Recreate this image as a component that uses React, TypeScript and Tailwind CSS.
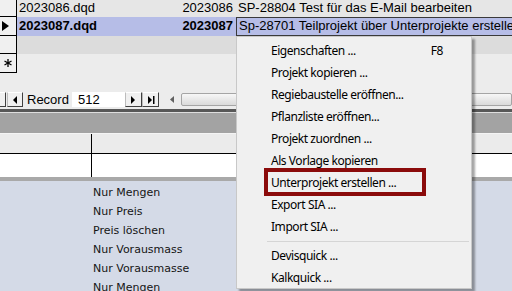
import React from 'react';

const MENU_ITEMS = [
  { label: 'Eigenschaften ...', shortcut: 'F8' },
  { label: 'Projekt kopieren ...' },
  { label: 'Regiebaustelle eröffnen...' },
  { label: 'Pflanzliste eröffnen...' },
  { label: 'Projekt zuordnen ...' },
  { label: 'Als Vorlage kopieren' },
  { label: 'Unterprojekt erstellen ...' },
  { label: 'Export SIA ...' },
  { label: 'Import SIA ...' },
];

const MENU_ITEMS_2 = [{ label: 'Devisquick ...' }, { label: 'Kalkquick ...' }];

const BOTTOM_LIST = [
  'Nur Mengen',
  'Nur Preis',
  'Preis löschen',
  'Nur Vorausmass',
  'Nur Vorausmasse',
  'Nur Mengen',
];

function Tri({ dir = 'right', bar = false }: { dir?: 'left' | 'right'; bar?: boolean }) {
  return (
    <svg width="8" height="8" viewBox="0 0 8 8">
      {dir === 'right' ? (
        <polygon points="1,0 5,4 1,8" fill="#000" />
      ) : (
        <polygon points="6,0 2,4 6,8" fill="#000" />
      )}
      {bar && <rect x={dir === 'right' ? 6 : 0} y="0" width="1.5" height="8" fill="#000" />}
    </svg>
  );
}

function NavButton({ children, className = '' }: { children?: React.ReactNode; className?: string }) {
  return (
    <div
      className={`h-[15px] flex items-center justify-center bg-[#f0f0f0] border border-[#404040] border-l-[#bcbcbc] border-t-[#ffffff] ${className}`}
    >
      {children}
    </div>
  );
}

export default function App() {
  return (
    <div className="relative w-[512px] h-[291px] overflow-hidden bg-[#ececec] font-['Liberation_Sans',Arial,sans-serif] text-[13px] text-black">
      {/* Datasheet rows */}
      <div className="flex flex-col">
        <div className="flex h-[17px] bg-[#e6e6e6]">
          <div className="w-[17px] shrink-0 bg-[#f0f0f0] border-r border-b border-black" />
          <div className="w-[120px] pl-[2px] leading-[16px]">2023086.dqd</div>
          <div className="w-[99px] pr-[3px] text-right leading-[16px]">2023086</div>
          <div className="flex-1 pl-[2px] whitespace-nowrap overflow-hidden leading-[16px]">
            SP-28804 Test für das E-Mail bearbeiten
          </div>
        </div>
        <div className="flex h-[19px] bg-[#b6bde7] font-bold">
          <div className="w-[17px] shrink-0 bg-[#f0f0f0] border-r border-b border-black flex items-center pl-[2px]">
            <svg width="8" height="10" viewBox="0 0 8 10">
              <polygon points="0,0 7,5 0,10" fill="#000" />
            </svg>
          </div>
          <div className="w-[120px] pl-[2px] leading-[18px]">2023087.dqd</div>
          <div className="w-[99px] pr-[3px] text-right leading-[18px]">2023087</div>
          <div className="flex-1 pl-[2px] whitespace-nowrap overflow-hidden font-normal border-l border-y border-[#3a3a3a] leading-[16px]">
            Sp-28701 Teilprojekt über Unterprojekte erstellen
          </div>
        </div>
        <div className="flex h-[18px] bg-[#dcdcdc]">
          <div className="w-[17px] shrink-0 bg-[#f0f0f0] border-r border-b border-black" />
        </div>
        <div className="flex h-[19px] bg-[#ececec]">
          <div className="w-[17px] shrink-0 bg-[#f0f0f0] border-r border-b border-black flex items-center justify-center">
            <svg width="8" height="8" viewBox="0 0 8 8">
              <g stroke="#000" strokeWidth="1.3">
                <line x1="4" y1="0" x2="4" y2="8" />
                <line x1="0.5" y1="2" x2="7.5" y2="6" />
                <line x1="0.5" y1="6" x2="7.5" y2="2" />
              </g>
            </svg>
          </div>
        </div>
      </div>

      {/* Record navigation */}
      <div className="mt-[19px] flex items-center h-[15px]">
        <NavButton className="w-[6px] border-l-0" />
        <NavButton className="w-[16px] ml-[1px]">
          <Tri dir="left" />
        </NavButton>
        <div className="ml-[4px] w-[45px] leading-[15px]">Record</div>
        <div className="w-[53px] h-[15px] bg-white pl-[6px] leading-[15px]">512</div>
        <NavButton className="w-[17px]">
          <Tri />
        </NavButton>
        <NavButton className="w-[17px]">
          <Tri bar />
        </NavButton>
        <div className="ml-[4px] flex-1 h-[15px] flex items-center">
          <div className="w-[18px] flex justify-center">
            <svg width="4" height="7" viewBox="0 0 4 7">
              <polygon points="4,0 0,3.5 4,7" fill="#606060" />
            </svg>
          </div>
          <div className="flex-1 h-[13px] rounded-[2px] border border-[#a5a5a5] bg-gradient-to-b from-[#f7f7f7] to-[#dadada]" />
        </div>
      </div>

      {/* Subform header */}
      <div className="mt-[2px] h-[3px] bg-[#585858]" />
      <div className="h-[1px] bg-[#dedede]" />
      <div className="h-[20px] bg-[#a3a3a3]" />
      <div className="h-[1px] bg-[#f4f4f4]" />
      <div className="flex h-[20px] bg-[#ebebeb] border-b border-black">
        <div className="w-[92px] border-r border-black" />
      </div>
      <div className="flex h-[23px] bg-white">
        <div className="w-[92px] border-r border-black" />
      </div>
      <div className="h-[4px] bg-[#a9a9a9]" />
      <div className="bg-[#d4dae7] pt-[2px] pl-[93px] font-['DejaVu_Sans',Tahoma,sans-serif] text-[11px] text-[#151515]">
        {BOTTOM_LIST.map((t, i) => (
          <div key={i} className="h-[19px] leading-[19px]">
            {t}
          </div>
        ))}
      </div>

      {/* Context menu */}
      <div className="absolute left-[236px] top-[36px] w-[236px] h-[253px] bg-[#f0f0f0] border border-[#c8c8c8] shadow-[3px_3px_2px_rgba(0,0,0,0.35)] pt-[3px] font-['Noto_Sans',sans-serif] text-[12px] tracking-[-0.45px] text-black">
        {MENU_ITEMS.map((item) => (
          <div key={item.label} className="h-[22px] flex items-center pl-[34px] pr-[28px]">
            <span className="flex-1">{item.label}</span>
            {item.shortcut && <span>{item.shortcut}</span>}
          </div>
        ))}
        <div className="h-[7px] flex items-center pl-[30px] pr-[2px]">
          <div className="h-[1px] w-full bg-[#d5d5d5]" />
        </div>
        {MENU_ITEMS_2.map((item) => (
          <div key={item.label} className="h-[22px] flex items-center pl-[34px]">
            {item.label}
          </div>
        ))}
      </div>

      {/* Highlight annotation */}
      <div className="absolute left-[264px] top-[168px] w-[162px] h-[28px] border-[4px] border-[#8b0b0b]" />
    </div>
  );
}
